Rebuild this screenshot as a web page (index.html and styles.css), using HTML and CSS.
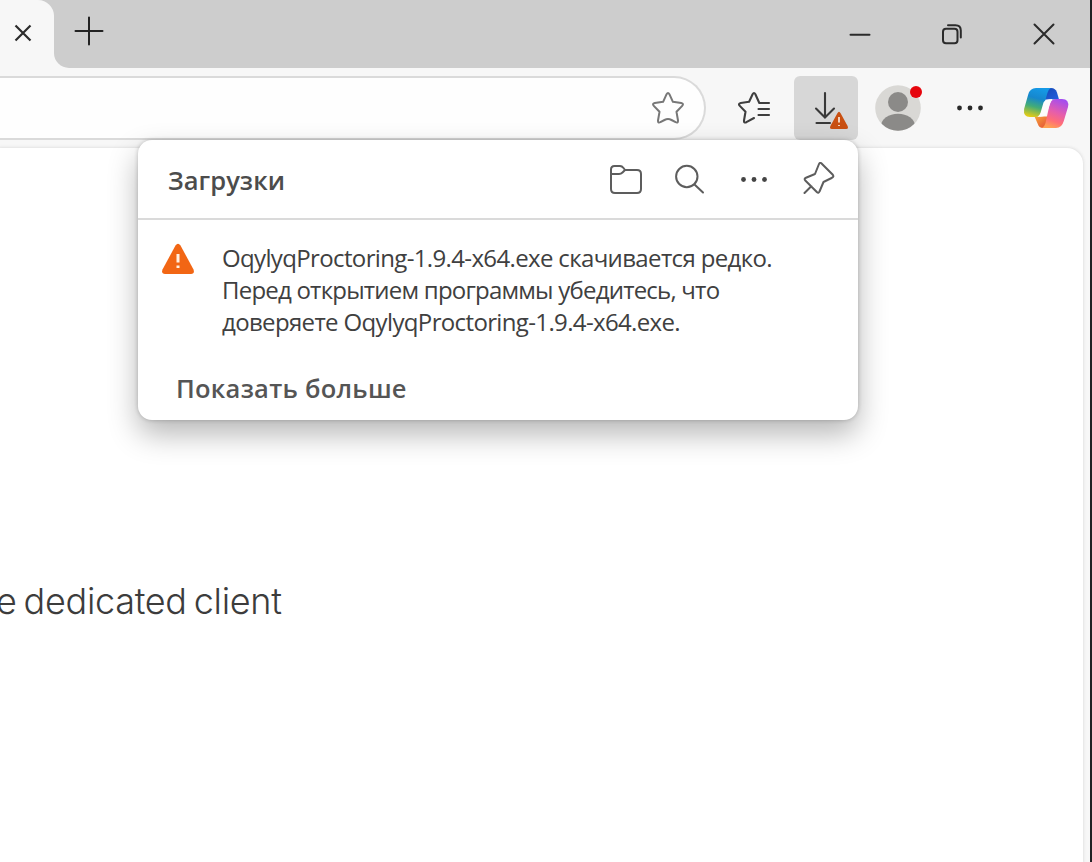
FILE: index.html
```html
<!DOCTYPE html>
<html lang="ru">
<head>
<meta charset="utf-8">
<title>Загрузки</title>
<link rel="stylesheet" href="styles.css">
</head>
<body>
<div class="window">
  <header class="titlebar">
    <div class="tab">
      <svg class="tab-close" viewBox="0 0 20 20"><path d="M2.500 2.500 17.500 17.500M17.500 2.500 2.500 17.500"/></svg>
    </div>
    <div class="strip">
      <svg class="new-tab" viewBox="0 0 30 30"><path d="M15 1.500V28.500M1.500 15H28.500"/></svg>
      <div class="controls">
        <svg viewBox="0 0 24 24"><path d="M2.500 12.800H21.500"/></svg>
        <svg viewBox="0 0 24 24"><rect x="3" y="6.800" width="14.500" height="14.500" rx="3"/><path d="M8 3.200H15.500Q20.800 3.200 20.800 8.500V15.500"/></svg>
        <svg viewBox="0 0 24 24"><path d="M2.500 2.500 21.500 21.500M21.500 2.500 2.500 21.500"/></svg>
      </div>
    </div>
  </header>

  <nav class="toolbar">
    <div class="address">
      <svg class="star" viewBox="0 0 34 34"><path d="M15.6 3.2Q17 .8 18.4 3.2L21.9 10.8 30.2 12Q33.2 12.8 31.2 14.9L25.5 20.8 27 29.5Q27.2 32.4 24.6 31.2L20.5 29Q17 27.2 13.5 29L9.4 31.2Q6.8 32.4 7 29.5L8.5 20.8 2.8 14.9Q.8 12.8 3.8 12L12.1 10.8Z"/></svg>
    </div>
    <svg class="favorites" viewBox="0 0 36 34"><path d="M32 12H22.3L18.4 3.2Q17 .8 15.6 3.2L12.1 10.8 3.8 12Q.8 12.8 2.8 14.9L8.5 20.8 7 29.5Q6.8 32.4 9.4 31.2L17 27M21.5 18H32M21.5 24H32"/></svg>
    <div class="download">
      <svg viewBox="0 0 64 64"><path class="arrow" d="M31 17V41M22 32.5 31 41.5 40 32.5M22.5 47H36"/><path class="warn-dark" d="M43.4 37.2Q45 34.2 46.6 37.2L53.6 50Q54.8 53 52.2 53H37.8Q35.2 53 36.4 50Z"/><path class="mark" d="M45 41V46.5M45 49V50"/></svg>
    </div>
    <svg class="avatar" viewBox="0 0 46 46"><defs><clipPath id="face"><circle cx="23" cy="23" r="22.8"/></clipPath></defs><circle cx="23" cy="23" r="22.8" fill="#d9d8d5"/><g clip-path="url(#face)" fill="#8b8a88"><circle cx="23" cy="17" r="10"/><ellipse cx="23" cy="41" rx="17" ry="12.3"/></g><circle cx="41" cy="7" r="6" fill="#e6050d"/></svg>
    <svg class="dots" viewBox="0 0 30 8"><circle cx="4.500" cy="4" r="2.400"/><circle cx="15" cy="4" r="2.400"/><circle cx="25.500" cy="4" r="2.400"/></svg>
    <svg class="copilot" viewBox="0 0 48 44">
      <defs>
        <linearGradient id="cool" x1=".55" y1="0" x2=".3" y2="1"><stop offset="0" stop-color="#1599e6"/><stop offset=".35" stop-color="#1687cd"/><stop offset=".65" stop-color="#43ac77"/><stop offset="1" stop-color="#e4cc16"/></linearGradient>
        <linearGradient id="warm" x1=".7" y1="0" x2=".35" y2="1"><stop offset="0" stop-color="#a34df0"/><stop offset=".45" stop-color="#e45dae"/><stop offset=".75" stop-color="#ff6d78"/><stop offset="1" stop-color="#ffa052"/></linearGradient>
        <linearGradient id="navy" x1="0" y1="0" x2="1" y2="1"><stop offset="0" stop-color="#1648b5"/><stop offset="1" stop-color="#2360df"/></linearGradient>
        <linearGradient id="ember" x1="0" y1="0" x2="1" y2="1"><stop offset="0" stop-color="#f7a63b"/><stop offset="1" stop-color="#e34b36"/></linearGradient>
      </defs>
      <path fill="url(#navy)" d="M24 2H29Q33.6 2 35 6.500L37 13.500H22Z"/>
      <path fill="url(#ember)" d="M12.500 30.500H26L25 42H21Q17 42 15.800 38Z"/>
      <path fill="url(#cool)" d="M14 2H29Q26.500 3 25.400 7L20.300 25Q18.500 31 13 31H8Q1 31 2.100 23L6.200 8.500Q8 2 14 2Z"/>
      <path fill="url(#warm)" d="M31 13H40Q47.500 13 46 21L41.800 35Q39.800 42 34 42H20Q22.500 40.800 23.500 37L27.500 19Q29 13 34 13Z"/>
      <path fill="#fdfbfc" d="M21.500 16.500Q23 13.200 30.500 13Q28.500 15 27.800 18.500L24.300 28.500Q22.500 30.800 15.500 30.800Q17.800 29.500 18.600 26.500Z"/>
    </svg>
  </nav>

  <main class="viewport">
    <div class="page"><p class="page-text"><span>e dedicated client</span></p></div>
  </main>

  <section class="popup">
    <header class="popup-head">
      <h1><span>Загрузки</span></h1>
      <div class="tools">
        <svg viewBox="0 0 36 36"><path d="M3 14V7.500Q3 4 6.500 4H12Q14 4 15.500 6L17 8H29Q33 8 33 12V27Q33 31 29 31H7Q3 31 3 27V12H11Q13 12 14.500 10.500L17 8"/></svg>
        <svg viewBox="0 0 36 36"><circle cx="14.800" cy="14.500" r="10.700"/><path d="M22.500 22.500 31 30.500"/></svg>
        <svg class="filled" viewBox="0 0 36 36"><circle cx="6.500" cy="17.500" r="2.400"/><circle cx="17" cy="17.500" r="2.400"/><circle cx="27.500" cy="17.500" r="2.400"/></svg>
        <svg viewBox="0 0 36 36"><path d="M20.300 1.300 31.800 12.800Q33.300 15 30.600 16L22.500 20 18.500 29.500Q17.600 31.800 15.800 30L4.300 18.500Q2.800 16.600 5 15.700L14 12 17.800 2.500Q18.800 0 20.300 1.300ZM10.300 24.200 3.500 31"/></svg>
      </div>
    </header>
    <div class="item">
      <svg class="alert" viewBox="0 0 34 32"><path fill="#f26614" d="M14.500 2.500Q17 -1 19.500 2.500L32.500 26.500Q34 31 30 31H4Q0 31 1.500 26.500Z"/><path class="mark-big" d="M17 11V19.500M17 22.500V25"/></svg>
      <p class="message">
        <span class="l1">OqylyqProctoring-1.9.4-x64.exe скачивается редко.</span>
        <span class="l2">Перед открытием программы убедитесь, что</span>
        <span class="l3">доверяете OqylyqProctoring-1.9.4-x64.exe.</span>
      </p>
    </div>
    <p class="more"><span>Показать больше</span></p>
  </section>
</div>
</body>
</html>
```
FILE: styles.css
```css
* { box-sizing: border-box; margin: 0; padding: 0; }
body { background: #f7f7f7; font-family: "Open Sans", "Noto Sans", sans-serif; overflow: hidden; }
svg { display: block; flex: none; fill: none; }
.window { position: relative; width: 1092px; height: 862px; display: flex; flex-direction: column; background: #f7f7f7; border-right: 2px solid #202224; }
.titlebar { display: flex; height: 68px; background: linear-gradient(#cdcdcd 0 30px, #f7f7f7 30px); }
.tab { width: 54px; background: #f7f7f7; border-top-right-radius: 16px; padding: 23px 0 0 13px; }
.tab-close { width: 20px; height: 20px; stroke: #2c2c2c; stroke-width: 2.2; }
.strip { flex: 1; display: flex; justify-content: space-between; background: #cdcdcd; border-bottom-left-radius: 15px; padding: 16px 34px 0 20px; }
.new-tab { width: 30px; height: 30px; stroke: #222; stroke-width: 2; stroke-linecap: round; }
.controls { display: flex; gap: 68px; padding-top: 6px; }
.controls svg { width: 24px; height: 24px; stroke: #2b2b2b; stroke-width: 2; stroke-linecap: round; }
.toolbar { display: flex; align-items: center; height: 80px; }
.address { width: 706px; height: 64px; display: flex; align-items: center; justify-content: flex-end; padding-right: 19px; background: #fefefe; border: 2px solid #dadada; border-left: 0; border-radius: 0 32px 32px 0; }
.star { width: 34px; height: 34px; stroke: #777; stroke-width: 2; stroke-linejoin: round; }
.favorites { width: 36px; height: 34px; margin-left: 31px; stroke: #3f3f3f; stroke-width: 2.1; stroke-linecap: round; stroke-linejoin: round; }
.download { width: 64px; height: 64px; margin-left: 21px; background: #d7d7d7; border-radius: 6px; }
.arrow { stroke: #383838; stroke-width: 2.1; stroke-linecap: round; }
.warn-dark { fill: #c95012; }
.mark { stroke: #f8dfcf; stroke-width: 1.8; }
.avatar { width: 46px; height: 46px; margin-left: 17px; overflow: visible; }
.dots { width: 30px; height: 8px; margin-left: 34px; fill: #292929; }
.copilot { width: 48px; height: 44px; margin-left: 37px; }
.viewport { flex: 1; display: flex; padding-right: 7px; }
.page { flex: 1; padding-top: 428px; background: #fff; border-top-right-radius: 16px; box-shadow: 0 0 3px 1px #e2e2e2; }
.page-text { font: 36px/50px Inter, sans-serif; font-weight: 300; color: #3c3c3c; white-space: nowrap; }
.page-text span { display: inline-block; letter-spacing: -.3px; word-spacing: -2.8px; margin-left: -4px; }
.popup { position: absolute; left: 138px; top: 140px; width: 720px; height: 280px; background: #fff; border-radius: 14px; box-shadow: 0 0 4px rgba(0,0,0,.22), 0 14px 30px rgba(0,0,0,.29); }
.popup-head { display: flex; justify-content: space-between; height: 80px; border-bottom: 2px solid #dadada; padding: 21px 21px 0 30px; }
h1 { font-size: 25.5px; line-height: 38px; font-weight: 600; letter-spacing: .05px; color: #4c4c4c; white-space: nowrap; }
.tools { display: flex; gap: 28.500px; padding-top: 1px; }
.tools svg { width: 36px; height: 36px; stroke: #5d5d5d; stroke-width: 2; stroke-linecap: round; stroke-linejoin: round; }
.tools .filled { fill: #444; stroke: none; }
.item { display: flex; gap: 27px; padding: 22px 0 0 23px; }
.alert { width: 34px; height: 32px; margin-top: 1px; }
.mark-big { stroke: #fff0e2; stroke-width: 3; }
.message { font-size: 24px; line-height: 32px; color: #404040; white-space: nowrap; }
.message span { display: block; width: max-content; }
.l1 { letter-spacing: -.64px; }
.l2 { letter-spacing: -.78px; }
.l3 { letter-spacing: -.64px; }
.more { margin: 34px 0 0 38px; font-size: 25.5px; line-height: 32px; font-weight: 600; letter-spacing: .25px; color: #555; white-space: nowrap; }
```
